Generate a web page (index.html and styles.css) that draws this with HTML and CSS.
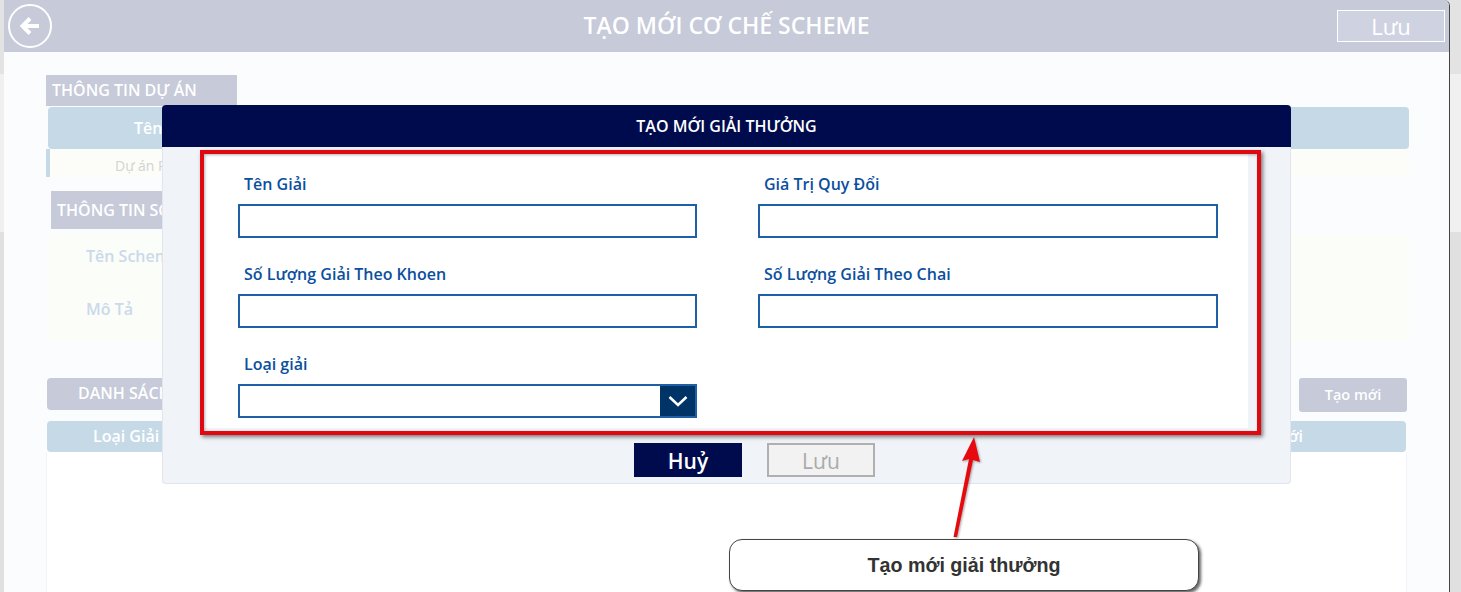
FILE: index.html
```html
<!DOCTYPE html>
<html lang="vi">
<head>
    <meta charset="UTF-8">
    <title>Tạo mới cơ chế scheme</title>
    <link rel="stylesheet" href="styles.css">
</head>
<body>

    <div class="window">
        <header class="topbar">
            <div class="topbar-left">
                <a class="back-btn" href="#">
                    <svg width="24" height="24" viewBox="0 0 24 24">
                        <path d="M21 12H5M12 4.500L4.500 12l7.500 7.500" fill="none" stroke="#fff" stroke-width="4"/>
                    </svg>
                </a>
            </div>
            <h1>TẠO MỚI CƠ CHẾ SCHEME</h1>
            <div class="topbar-right">
                <button class="save-top">Lưu</button>
            </div>
        </header>

        <div class="content">
            <div class="section-title">THÔNG TIN DỰ ÁN</div>
            <div class="project-head">Tên Dự Án</div>
            <div class="project-row">Dự án Pepsi</div>

            <div class="section-title scheme-title">THÔNG TIN SCHEME</div>
            <div class="scheme-panel">
                <div class="scheme-label">Tên Scheme</div>
                <div class="scheme-label">Mô Tả</div>
            </div>

            <div class="list-bar">
                <div class="list-title">DANH SÁCH GIẢI THƯỞNG</div>
                <div class="list-add">Tạo mới</div>
            </div>
            <div class="list-head">
                <span>Loại Giải</span>
                <span>Tạo mới</span>
            </div>
            <div class="list-body"></div>
        </div>
    </div>

    <div class="modal">
        <div class="modal-title">TẠO MỚI GIẢI THƯỞNG</div>
        <form class="modal-form">
            <div class="field">
                <label for="tenGiai">Tên Giải</label>
                <input type="text" id="tenGiai">
            </div>
            <div class="field">
                <label for="giaTri">Giá Trị Quy Đổi</label>
                <input type="text" id="giaTri">
            </div>
            <div class="field">
                <label for="slKhoen">Số Lượng Giải Theo Khoen</label>
                <input type="text" id="slKhoen">
            </div>
            <div class="field">
                <label for="slChai">Số Lượng Giải Theo Chai</label>
                <input type="text" id="slChai">
            </div>
            <div class="field">
                <label for="loaiGiai">Loại giải</label>
                <div class="select-box">
                    <select id="loaiGiai"></select>
                    <span class="select-arrow">
                        <svg width="20" height="12" viewBox="0 0 20 12">
                            <path d="M1.500 2l8.500 8 8.500-8" fill="none" stroke="#fff" stroke-width="2.500"/>
                        </svg>
                    </span>
                </div>
            </div>
        </form>
        <div class="modal-actions">
            <button class="btn-cancel" type="button">Huỷ</button>
            <button class="btn-save" type="button" disabled>Lưu</button>
        </div>
        <div class="red-frame"></div>
    </div>

    <svg class="note-arrow" width="40" height="115" viewBox="0 0 40 115">
        <path d="M3.500 107L19 29l-7 2L24 7l6 25-7-2L7 107z" fill="#e8090f"/>
    </svg>
    <div class="note">Tạo mới giải thưởng</div>

</body>
</html>
```

FILE: styles.css
```css
body {
    position: relative;
    margin: 0;
    height: 592px;
    overflow: hidden;
    font-family: 'Open Sans', sans-serif;
    background: linear-gradient(#e3e3e3 74px, #f0f0f0 74px, #f0f0f0 232px, #e0e0e0 232px);
}

.window {
    box-sizing: border-box;
    width: 1446px;
    height: 592px;
    margin-left: 4px;
    background-color: #fbfcfe;
    border-right: 1px solid #444;
    border-top-right-radius: 6px;
    overflow: hidden;
}

.topbar {
    display: grid;
    grid-template-columns: 1fr auto 1fr;
    align-items: center;
    height: 52px;
    background-color: #c6cad9;
}

.topbar h1 {
    margin: 0 0 2px;
    font-size: 23px;
    font-weight: 600;
    color: #fff;
}

.back-btn {
    display: flex;
    align-items: center;
    justify-content: center;
    box-sizing: border-box;
    width: 44px;
    height: 44px;
    margin-left: 4px;
    border: 2px solid #fff;
    border-radius: 50%;
}

.topbar-right {
    display: flex;
    justify-content: flex-end;
    padding-right: 4px;
}

.save-top {
    width: 108px;
    height: 32px;
    padding: 0;
    border: 1px solid #fff;
    background-color: #cfd3e1;
    color: #fff;
    font-family: inherit;
    font-size: 22px;
}

.content {
    padding: 23px 40px 0 42px;
}

.section-title {
    box-sizing: border-box;
    width: 191px;
    height: 31px;
    padding-left: 6px;
    line-height: 30px;
    background-color: #c6cad9;
    color: #fff;
    font-size: 16px;
    font-weight: 600;
}

.project-head {
    height: 42px;
    margin: 1px 0 0 2px;
    padding-left: 86px;
    line-height: 42px;
    background-color: #c6d9e7;
    border-radius: 4px;
    color: #fff;
    font-size: 16px;
    font-weight: 600;
}

.project-row {
    height: 28px;
    padding-left: 65px;
    line-height: 33px;
    background-color: #fcfdf9;
    border-left: 4px solid #c6d9e7;
    color: #d2d2d2;
    font-size: 14px;
}

.scheme-title {
    width: 300px;
    height: 38px;
    margin: 14px 0 0 5px;
    line-height: 38px;
}

.scheme-panel {
    height: 108px;
    margin: 5px 0 0 2px;
    padding-left: 38px;
    background-color: #fbfdf9;
}

.scheme-label {
    height: 53px;
    line-height: 44px;
    color: #ccd9ea;
    font-size: 16px;
    font-weight: 600;
}

.list-bar {
    display: flex;
    align-items: flex-start;
    gap: 9px;
    margin: 36px 2px 0 1px;
}

.list-title {
    flex: 1;
    height: 32px;
    padding-left: 31px;
    line-height: 31px;
    background-color: #c6cad9;
    border-radius: 4px;
    color: #fff;
    font-size: 16px;
    font-weight: 600;
}

.list-add {
    width: 108px;
    height: 34px;
    line-height: 33px;
    text-align: center;
    background-color: #c6cad9;
    border-radius: 3px;
    color: #fff;
    font-size: 14.500px;
    font-weight: 600;
}

.list-head {
    display: flex;
    justify-content: space-between;
    height: 31px;
    margin: 9px 3px 0 1px;
    padding: 0 103px 0 46px;
    line-height: 30px;
    background-color: #c6d9e7;
    border-radius: 4px;
    color: #fff;
    font-size: 16px;
    font-weight: 600;
}

.list-body {
    height: 140px;
    margin-right: 2px;
    background-color: #fff;
    border-left: 1px solid #f1f3f8;
    border-right: 1px solid #f1f3f8;
}

/* popup */
.modal {
    position: absolute;
    left: 162px;
    top: 105px;
    box-sizing: border-box;
    width: 1129px;
    height: 379px;
    background-color: #f0f3f8;
    border: 1px solid #e2e5ec;
    border-top: 0;
    border-radius: 4px;
}

.modal-title {
    height: 42px;
    margin: 0 -1px;
    line-height: 43px;
    text-align: center;
    background-color: #000b4d;
    border-radius: 4px 4px 0 0;
    color: #fff;
    font-size: 16px;
    font-weight: 600;
}

.modal-form {
    display: grid;
    grid-template-columns: 459px 460px;
    column-gap: 61px;
    row-gap: 25px;
    align-content: start;
    box-sizing: border-box;
    width: 1044px;
    height: 276px;
    margin: 5px 0 0 41px;
    padding: 21px 0 0 34px;
    background-color: #fff;
}

.field label {
    display: block;
    height: 22px;
    margin-bottom: 9px;
    padding-left: 6px;
    line-height: 22px;
    color: #0b4f9e;
    font-size: 16px;
    font-weight: 600;
}

.field input,
.select-box {
    display: flex;
    box-sizing: border-box;
    width: 100%;
    height: 34px;
    border: 2px solid #1f5fa6;
    background-color: #fff;
}

.select-box select {
    flex: 1;
    border: none;
    background: #fff;
    appearance: none;
}

.select-arrow {
    display: flex;
    align-items: center;
    justify-content: center;
    width: 35px;
    background-color: #003366;
}

.modal-actions {
    display: flex;
    justify-content: center;
    gap: 25px;
    margin: 15px 0 0 56px;
}

.modal-actions button {
    box-sizing: border-box;
    width: 108px;
    height: 34px;
    padding: 2px 0 0;
    font-family: inherit;
    font-size: 21px;
}

.btn-cancel {
    border: none;
    background-color: #000b4d;
    color: #fff;
    font-weight: 600;
}

.btn-save {
    border: 2px solid #b0b0b0;
    background-color: #f2f2f2;
    color: #aaa;
}

/* red annotation over the screenshot */
.red-frame {
    position: absolute;
    left: 37px;
    top: 45px;
    box-sizing: border-box;
    width: 1061px;
    height: 285px;
    border: 4px solid #e0090f;
    box-shadow: 2px 2px 4px rgba(0, 0, 0, 0.5), inset 1px 1px 3px rgba(0, 0, 0, 0.3);
}

.note-arrow {
    position: absolute;
    left: 950px;
    top: 430px;
    filter: drop-shadow(1px 1px 1px rgba(0, 0, 0, 0.35));
}

.note {
    position: absolute;
    left: 729px;
    top: 539px;
    box-sizing: border-box;
    width: 470px;
    height: 52px;
    line-height: 50px;
    text-align: center;
    background-color: #fff;
    border: 1px solid #444;
    border-radius: 13px;
    box-shadow: 2px 2px 3px #666;
    color: #333;
    font-family: 'Liberation Sans', sans-serif;
    font-size: 19.700px;
    font-weight: bold;
}
```
